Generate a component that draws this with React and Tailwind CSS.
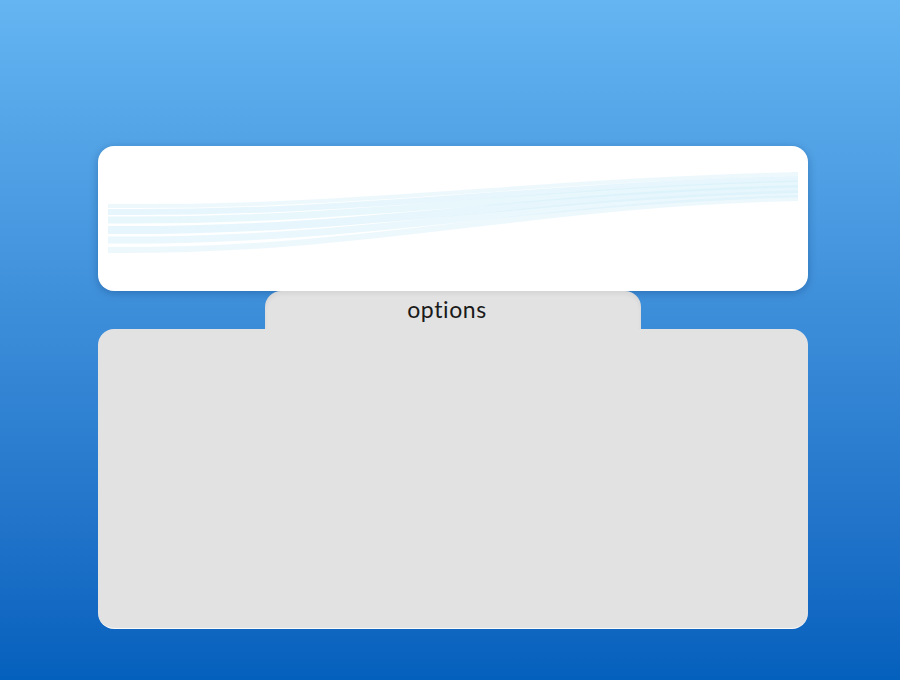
import React from "react";

const bands = [
  { l: 36, r: 4, w: 4, o: 0.45 },
  { l: 42, r: 9, w: 6, o: 0.6 },
  { l: 50, r: 14, w: 7, o: 0.55 },
  { l: 60, r: 19, w: 8, o: 0.6 },
  { l: 70, r: 24, w: 7, o: 0.5 },
  { l: 80, r: 28, w: 6, o: 0.45 },
];

const Waves = () => (
  <svg width="690" height="92" viewBox="0 0 690 92" className="block">
    {bands.map((b, i) => (
      <path
        key={i}
        d={`M0 ${b.l} C 260 ${b.l + 2}, 420 ${b.r + 6}, 690 ${b.r}`}
        fill="none"
        stroke="#d6f0fa"
        strokeWidth={b.w}
        strokeOpacity={b.o}
      />
    ))}
  </svg>
);

const App = () => {
  return (
    <div className="w-full h-[680px] bg-gradient-to-b from-[#64b5f1] to-[#0460bd] pt-[146px] px-[98px] font-['Lato',sans-serif]">
      <div className="w-[710px] h-[145px] bg-white rounded-2xl shadow-[0_2px_8px_rgba(0,40,90,0.3)] px-[10px] pt-[24px]">
        <Waves />
      </div>
      <div className="w-[710px] flex justify-center">
        <div className="w-[376px] h-[38px] bg-[#e2e2e2] rounded-t-2xl flex justify-center pt-[4px] shadow-[inset_0_3px_4px_rgba(0,0,0,0.06)]">
          <span className="text-[23px] leading-[28px] text-[#1a1a1a] tracking-[0.6px] -ml-[12px]">options</span>
        </div>
      </div>
      <div className="w-[710px] h-[300px] bg-[#e2e2e2] rounded-2xl border-b border-white/80"></div>
    </div>
  );
};

export default App;
